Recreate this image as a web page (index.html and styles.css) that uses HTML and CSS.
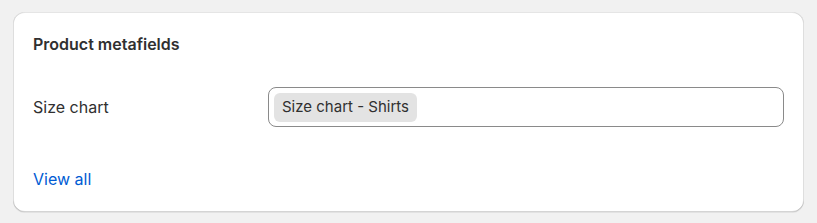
FILE: index.html
```html
<!DOCTYPE html>
<html>
<head>
<meta charset="utf-8">
<link rel="stylesheet" href="styles.css">
</head>
<body>
<div class="page">
  <section class="card">
    <h2 class="card-title">Product metafields</h2>
    <div class="field-row">
      <div class="field-label">Size chart</div>
      <div class="field-input">
        <span class="tag">Size chart - Shirts</span>
      </div>
    </div>
    <a class="view-all" href="#">View all</a>
  </section>
</div>
</body>
</html>
```
FILE: styles.css
```css
html, body {
  margin: 0;
  padding: 0;
  background: #f1f1f1;
  font-family: Inter, "Noto Sans", sans-serif;
  color: #303030;
}
.page {
  padding: 12px 13px 11px 13px;
}
.card {
  background: #ffffff;
  border-radius: 12px;
  box-shadow: 0 1px 0 0 rgba(26,26,26,0.07), 0 1px 0 0 rgba(204,204,204,0.5) inset, 0 -1px 0 0 rgba(0,0,0,0.17) inset, -1px 0 0 0 rgba(0,0,0,0.13) inset, 1px 0 0 0 rgba(0,0,0,0.13) inset;
  padding: 20px 20px 21px 20px;
  height: 159px;
  display: flex;
  flex-direction: column;
}
.card-title {
  margin: 0;
  font-size: 16px;
  line-height: 24px;
  font-weight: 600;
}
.field-row {
  display: flex;
  align-items: center;
  margin-top: 31px;
}
.field-label {
  width: 235px;
  font-size: 16px;
  line-height: 24px;
}
.field-input {
  flex: 1;
  height: 38px;
  border: 1px solid #8a8a8a;
  border-radius: 8px;
  display: flex;
  align-items: center;
  padding: 0 5px;
}
.tag {
  background: #e3e3e3;
  border-radius: 6px;
  font-size: 15px;
  line-height: 20px;
  padding: 4px 8px 5px 8px;
}
.view-all {
  margin-top: auto;
  color: #005bd3;
  text-decoration: none;
  font-size: 16px;
  line-height: 24px;
  align-self: flex-start;
}
```
